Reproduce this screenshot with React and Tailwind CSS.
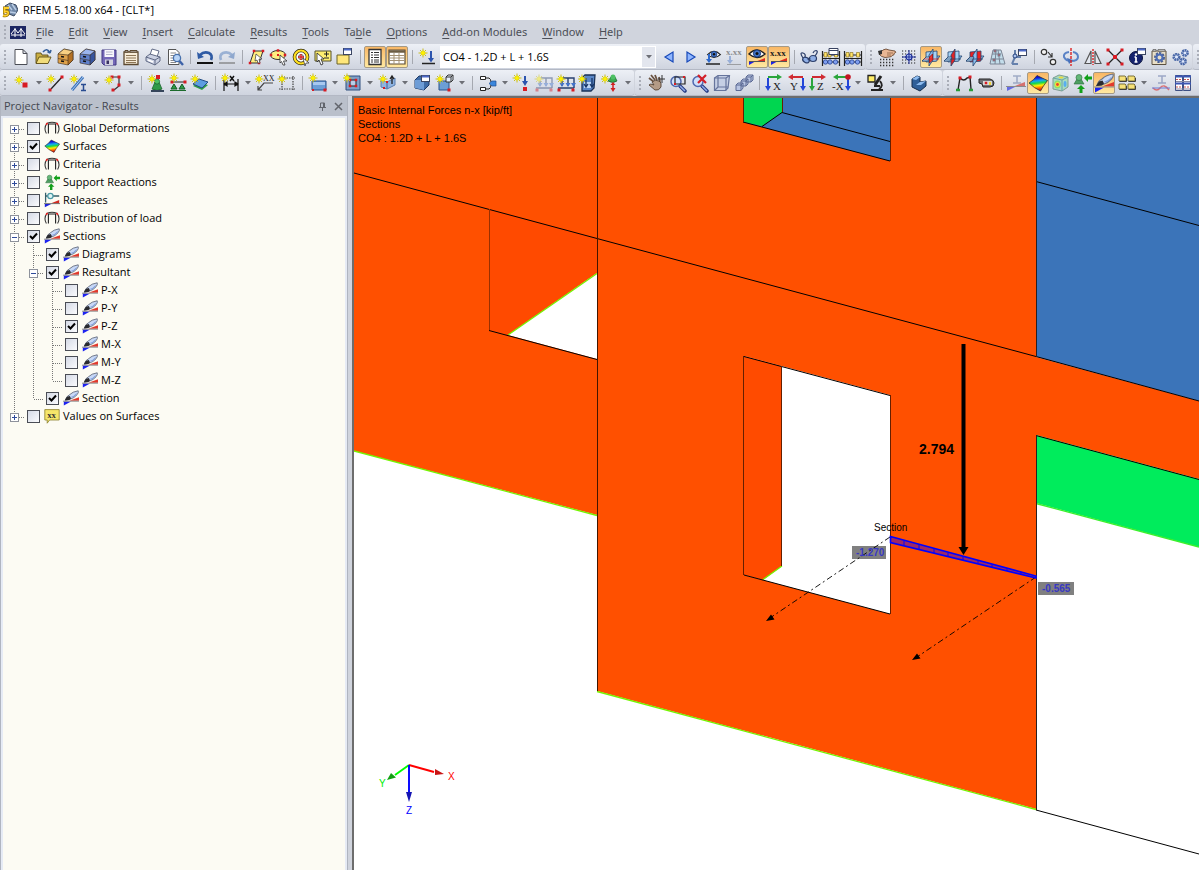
import { useState } from 'react';

const Star = ({ x = 5, y = 6 }) => (
  <g transform={`translate(${x} ${y})`} stroke="#c9bd22" strokeWidth="1" fill="none">
    <path d="M0-4.5V4.5M-4.5 0H4.5M-3-3L3 3M3-3L-3 3" />
    <circle r="2.1" fill="#fff200" stroke="#eadf10" />
  </g>
);
const Red = ({ x, y, s = 3 }) => <rect x={x - s / 2} y={y - s / 2} width={s} height={s} fill="#d81c24" />;
const Wedge = ({ y = 14 }) => (
  <g>
    <path d={`M1 ${y + 1}H9L1 ${y + 5}Z`} fill="#1b22e0" />
    <path d={`M9 ${y}L19 ${y - 4}V${y}Z`} fill="#d02a20" />
    <path d={`M0 ${y + 0.5}H20`} stroke="#555" />
  </g>
);
const Nib = () => (
  <g>
    <path d="M1 14.500H10L1 19.500Z" fill="#1c22f0" /><path d="M8 13.500L20 9V13.500Z" fill="#e23a2c" />
    <path d="M0 14H20" stroke="#8a8a8a" strokeWidth="1.200" />
    <path d="M3 12.500Q4 8 8 6Q12 2 19 1Q20 3 17.500 6Q14 10 9 11.500Z" fill="#c9d9f6" stroke="#6d7485" strokeWidth="1.200" />
    <path d="M8 9.500Q14 8 17.500 3.500Q17 7 13 9Z" fill="#7f9fe0" />
    <path d="M2 13L5 8.500L8.500 7.500L10 10.500L8 12.500Z" fill="#2a2a2e" />
  </g>
);
const Green = ({ x = 10, y = 11 }) => (
  <g transform={`translate(${x} ${y})`} fill="#2f9a48" stroke="#155b27" strokeWidth=".7">
    <path d="M-2-3H2L5 4Q0 7-5 4Z" /><circle cy="-3.500" r="2.600" fill="#4cc063" />
  </g>
);
const Abacus = ({ win }) => (
  <g>
    <path d="M1.500 4V19M18.500 4V19M1.500 8H18.500M1.500 15H18.500M1.500 11.500H18.500" stroke="#222" strokeWidth="1.200" />
    <path d="M3 5.500H6V10H3ZM7 5.500H10V10H7ZM13.500 5.500H16.500V10H13.500Z" fill="#ffe36a" stroke="#806914" strokeWidth=".6" />
    <g fill="#7f9ff0" stroke="#24408f" strokeWidth=".8"><circle cx="4.500" cy="15" r="2.200" /><circle cx="9" cy="15" r="2.200" /><circle cx="14.500" cy="15" r="2.200" /></g>
    {win && <path d="M8 1.500H17V7.500H8ZM8 3.500H17" fill="#fff" stroke="#384260" />}
  </g>
);
const Cabinet = ({ a, b, c }) => (
  <g stroke="#392a1b" strokeWidth=".6">
    <path d="M3 7L9 2L18 4V13L13 18L3 16Z" fill={a} /><path d="M13 8L18 4V13L13 18Z" fill={c} /><path d="M3 7L9 2L18 4L13 8Z" fill={b} />
    <path d="M3 11.500L13 13.500" /><path d="M6 9.500L9 10M6 14L9 14.500" stroke="#111" strokeWidth="1.700" />
  </g>
);
const Win = ({ x = 10, y = 2 }) => (
  <g transform={`translate(${x} ${y})`}><rect x=".5" y=".5" width="8" height="6" fill="#fff" stroke="#3b4663" /><path d="M1 1.500H8" stroke="#4c68c6" strokeWidth="2" /></g>
);
const Mag = () => (
  <g><path d="M12 13L17 18" stroke="#253b83" strokeWidth="3.500" strokeLinecap="round" /><path d="M12 13L17 18" stroke="#93adeb" strokeWidth="1.500" /><circle cx="8" cy="8.500" r="5" fill="#cfe0fb" stroke="#4f68ae" strokeWidth="1.500" /></g>
);
const Axes = ({ a, b, t, neg }) => (
  <g>
    {neg ? (
      <g><path d="M17 4H6" stroke={a} strokeWidth="2" /><path d="M17 5V14" stroke={b} strokeWidth="2" /><path d="M2 4L7 1V7Z" fill={a} /><path d="M14 13H20L17 18Z" fill={b} /></g>
    ) : (
      <g><path d="M4 4H14" stroke={a} strokeWidth="2" /><path d="M4 5V14" stroke={b} strokeWidth="2" /><path d="M18 4L13 1V7Z" fill={a} /><path d="M1 13H7L4 18Z" fill={b} /></g>
    )}
    <text x={neg ? (t.length > 1 ? 1 : 4) : 9} y="17" fontFamily="Liberation Serif, serif" fontSize="11" fill="#222">{t}</text>
  </g>
);
const Plane = ({ r }) => (
  <g stroke="#23446f" strokeWidth=".8" strokeLinejoin="round">
    <path d="M1 14L6 9H19L15 14Z" fill="#8fc2ef" />
    <path d="M5 5L16 4V14L5 15Z" fill={r === 2 ? '#ef2020' : '#a6d2f5'} />
    <path d="M8 19V8L12 2V13Z" fill={r === 1 ? '#e22323' : '#8cbfee'} />
    <path d="M1 14L5 10H9L7 14Z" fill="#b9dcf7" />
    {r === 0 && <path d="M8.500 10L11.500 7V13L8.500 16Z" fill="#ef3b33" stroke="#9b1010" />}
    <path d="M3 12H18" stroke={r === 0 ? '#c22' : '#23446f'} />
  </g>
);
const Hand = () => (
  <g><path d="M6 3Q9 1 12 3L18 4Q20 5.500 17 6.500Q18 8 15 8.500Q15 10 12 10L8 10.500Q4 10 2 7Z" fill="#e9b794" stroke="#5b3a24" strokeWidth=".8" /><path d="M1 4L5 3V7L2 8Z" fill="#333" /><path d="M10 6H16M10 8H14" stroke="#7c5137" strokeWidth=".7" /></g>
);
const Eye = () => (
  <g><path d="M2 7Q10-1 18 7Q10 14 2 7Z" fill="#fff" stroke="#222" strokeWidth="1.400" /><circle cx="10" cy="6.500" r="3.600" fill="#4375c9" stroke="#1b3c7d" /><circle cx="10" cy="6.500" r="1.500" fill="#111" /></g>
);
const Frame = () => (
  <g fill="none"><path d="M5.500 17V5H14.500V17" stroke="#222" strokeWidth="1.400" /><path d="M3 17Q-1 10 4 4Q10 1.500 16 4Q21 10 17 17" stroke="#333" strokeWidth="1.300" /><path d="M2.500 6L4.500 3.800M15.500 3.800L17.500 6" stroke="#e22" strokeWidth="2" /></g>
);
const LoadDown = ({ pale }) => (
  <g opacity={pale ? 0.45 : 1}><path d="M6 5H18V15M6 5V13M12 5V13M2 15H18" stroke="#28406f" fill="none" strokeWidth="1.400" /><path d="M3.500 10H8.500L6 14ZM9.500 10H14.500L12 14ZM15 10H20L17.500 14Z" fill="#4272cb" /><Red x={3} y={17} /><Red x={17} y={17} /><Star /></g>
);
const Rainbow = () => (
  <g>
    <defs>
      <linearGradient id="iso" x1=".35" y1="0" x2=".5" y2="1">
        <stop offset=".15" stopColor="#1212d8" /><stop offset=".35" stopColor="#16a8f4" /><stop offset=".5" stopColor="#18d84a" /><stop offset=".66" stopColor="#fff200" /><stop offset=".8" stopColor="#ff7a00" /><stop offset=".95" stopColor="#e81010" />
      </linearGradient>
    </defs>
    <path d="M1 10Q6 7 9 2.500Q14 5 19.500 7.500Q15 13 12.500 18Q6 15 1 10Z" fill="url(#iso)" stroke="#222" strokeWidth=".7" />
  </g>
);
const SupportArrows = () => (
  <g><g fill="#4f9f62" stroke="#2c6b3c" strokeWidth=".6"><path d="M5 6H9L12 11H2Z" /><circle cx="7" cy="4.500" r="3" fill="#64b878" /></g><path d="M12 5L16 1V3.500H20V6.500H16V9Z" fill="#12a01a" /><path d="M9 12L13 16H10.500V20H7.500V16H5Z" fill="#12a01a" /></g>
);

const ICONS = {
  new: <path d="M4 2.500H12L16 6.500V17.500H4ZM12 2.500V6.500H16" fill="#fff" stroke="#4a4d55" />,
  open: <g stroke="#5e4e16" strokeWidth=".9"><path d="M3 16V6H8L9 8H15V16Z" fill="#c9ae42" /><path d="M3 16.500L6 10H18L15 16.500Z" fill="#f1dc7b" /><path d="M10 5Q14 0 17 6M17 6L14.500 4.500M17 6L18 3" fill="none" stroke="#36609b" strokeWidth="1.600" /></g>,
  cabA: <Cabinet a="#e0a24a" b="#f7cf83" c="#b47124" />,
  cabB: <Cabinet a="#5f80cc" b="#9bb5ee" c="#38559d" />,
  save: <g><path d="M3 3H17V18H5L3 16Z" fill="#7468b8" stroke="#423982" /><path d="M5.500 3H15V10H5.500Z" fill="#f7f7fc" /><path d="M7 5H13.500M7 7.500H13.500" stroke="#b5b5cc" /><path d="M6 12.500H14V18H6Z" fill="#d2d2e0" /><path d="M7.500 13.500H10V17H7.500Z" fill="#383262" /></g>,
  notes: <g><path d="M3 5H17V17.500H3Z" fill="#f7ecd8" stroke="#5c4930" strokeWidth="1.300" /><path d="M4 3.500H7V5H4ZM9 3.500H16V5H9Z" fill="#ddd" stroke="#5c4930" /><path d="M5 8.500H15M5 11H15M5 13.500H15M5 15.500H15" stroke="#8d7656" /></g>,
  print: <g stroke="#555f7c" strokeWidth=".9"><path d="M7 8L9 2L16 4L14 10Z" fill="#fff" /><path d="M3 10L7 7L17 10V14L12 18L3 14Z" fill="#cbd1e2" /><path d="M3 10L12 13L17 10M12 13V18" fill="none" /><path d="M5 13L10 15" stroke="#fff" strokeWidth="1.500" /></g>,
  preview: <g><path d="M3.500 2.500H11L14 5.500V17.500H3.500Z" fill="#fff" stroke="#555" /><path d="M5.500 6H11M5.500 8.500H9M5.500 11H8M5.500 13.500H9M5.500 15.500H11" stroke="#888" /><circle cx="12" cy="11" r="3.600" fill="#b8d4f6" stroke="#4770ac" strokeWidth="1.300" /><path d="M14.500 14L18 18" stroke="#3d62a8" strokeWidth="2.400" /></g>,
  undo: <g><path d="M5 8Q9 4 14 6Q18 8 16 13" fill="none" stroke="#2f5ba4" strokeWidth="2.600" /><path d="M2 5L3 12L9 10Z" fill="#2f5ba4" /><path d="M2 16H18" stroke="#111" strokeWidth="2" /></g>,
  redo: <g opacity=".6"><path d="M15 8Q11 4 6 6Q2 8 4 13" fill="none" stroke="#6b8fc4" strokeWidth="2.600" /><path d="M18 5L17 12L11 10Z" fill="#5b82bc" /><path d="M2 16H18" stroke="#777" strokeWidth="2" /></g>,
  selPoly: <g><path d="M7 4H16L12 16H3Z" fill="#ffee80" stroke="#333" /><Red x={7} y={4} s={2.500} /><Red x={16} y={4} s={2.500} /><Red x={12} y={16} s={2.500} /><Red x={3} y={16} s={2.500} /><path d="M9 7L15 12H12L13 16L11 16L10 13L8 14Z" fill="#fff" stroke="#333" strokeWidth=".7" /></g>,
  selEll: <g><ellipse cx="9" cy="8" rx="7.500" ry="4.500" fill="#ffee80" stroke="#333" /><Red x={9} y={8} s={2} /><Red x={2} y={8} s={2.500} /><Red x={9} y={3.500} s={2.500} /><Red x={16} y={8} s={2.500} /><path d="M11 8L18 14H14.500L16 18L14 18L12.500 14.500L11 16Z" fill="#fff" stroke="#333" strokeWidth=".8" /></g>,
  selRing: <g><circle cx="10" cy="10" r="6.500" fill="#fff" stroke="#302b10" strokeWidth="3.600" /><circle cx="10" cy="10" r="6.500" fill="none" stroke="#ffe020" strokeWidth="2.200" /><circle cx="10" cy="10" r="2.500" fill="none" stroke="#555" /><path d="M10 7V13M7 10H13" stroke="#d22" strokeWidth="1.400" /><path d="M12 11L18 16L15 16L14 19Z" fill="#fff" stroke="#333" strokeWidth=".7" /></g>,
  selPm: <g><path d="M2 4H18V14H2Z" fill="#ffee70" stroke="#55502b" /><path d="M4 6L11 12H8L10 17L8 18L6 13L4 15Z" fill="#fff" stroke="#222" strokeWidth=".8" /><path d="M11 7H16M13.500 4.500V9.500M11 11H16" stroke="#222" /></g>,
  selWin: <g><path d="M2 8H14V17H2Z" fill="#ffe77a" stroke="#6a6228" /><Win x={8} y={1} /></g>,
  list: <g><path d="M4 2.500H16V17.500H4Z" fill="#fff" stroke="#333" strokeWidth="1.300" /><path d="M6 5.500H8M9 5.500H14M6 8H8M9 8H14M6 10.500H8M9 10.500H14M6 13H8M9 13H14M6 15H8M9 15H14" stroke="#333" /></g>,
  table: <g><path d="M2 3H18V17H2Z" fill="#fff" stroke="#5a4b33" strokeWidth="1.200" /><path d="M2 4.500H18" stroke="#6c5d44" strokeWidth="2.500" /><path d="M3 8.500H17M3 11H17M3 13.500H17M7 6V17M12 6V17" stroke="#a39175" /></g>,
  newLoad: <g><Star x={6} y={6} /><path d="M14 4V12" stroke="#2c54ae" strokeWidth="2" /><path d="M11 11H17L14 15.500Z" fill="#2c54ae" /><path d="M5 16.500H18" stroke="#222" strokeWidth="1.500" /></g>,
  prev: <path d="M14 5V15L6 10Z" fill="#8fb6ff" stroke="#1748b8" strokeWidth="1.200" />,
  next: <path d="M6 5V15L14 10Z" fill="#8fb6ff" stroke="#1748b8" strokeWidth="1.200" />,
  eyeLoad: <g><g transform="translate(3 2) scale(.8)"><Eye /></g><path d="M6 7V13" stroke="#2f6acc" strokeWidth="2" /><path d="M3 12H9L6 16Z" fill="#2f6acc" /><path d="M3 17H17" stroke="#222" strokeWidth="1.500" /></g>,
  xxLoad: <g opacity=".6"><text x="1" y="8" fontSize="9" fontWeight="bold" fill="#555" fontFamily="Liberation Serif, serif">x.xx</text><path d="M5 9V15" stroke="#6d90cf" strokeWidth="2" /><path d="M2 13H8L5 17Z" fill="#6d90cf" /><path d="M2 17.500H16" stroke="#777" /></g>,
  eyeRes: <g><Eye /><path d="M2 14L9 14L2 18Z" fill="#1c22e8" /><path d="M18 11V14.500H9Z" fill="#dd2b20" /><path d="M2 14.500H18" stroke="#555" /></g>,
  xxRes: <g><text x="1" y="9" fontSize="9" fontWeight="bold" fill="#222" fontFamily="Liberation Serif, serif">x.xx</text><path d="M2 14L9 14L2 18Z" fill="#1c22e8" /><path d="M18 11V14.500H9Z" fill="#dd2b20" /><path d="M2 14.500H18" stroke="#555" /></g>,
  glasses: <g fill="#8eaee5" stroke="#2c3e69" strokeWidth="1.200"><ellipse cx="7" cy="13" rx="3.500" ry="2.500" transform="rotate(30 7 13)" /><ellipse cx="14" cy="11.500" rx="3.500" ry="3" /><path d="M4 11Q0 5 4 6Q7 7 6 10M9 13Q10 10 11 12M16 9Q20 4 17 3.500Q15 3.500 14 6" fill="none" /></g>,
  abaWin: <Abacus win />,
  aba: <Abacus />,
  handGrid: <g><Hand /><path d="M3 12.500H18M3 15.500H18M3 18.500H18" stroke="#333" strokeWidth="1.300" strokeDasharray="1.300 1.700" /></g>,
  gridSnap: <g><path d="M3 4H18M3 7H18M3 10H18M3 13H18M3 16H18" stroke="#222" strokeWidth="1.200" strokeDasharray="1.200 1.800" /><circle cx="10" cy="10" r="3" fill="#b5c9f5" stroke="#1d2d9a" strokeWidth="1.200" /><path d="M10 3V17M3 10H17" stroke="#1d2d9a" /></g>,
  plane0: <Plane r={0} />, plane1: <Plane r={1} />, plane2: <Plane r={2} />,
  tower: <g fill="none" stroke="#7b8494"><path d="M6 3H14L18 17H3Z" fill="#c3ddeb" /><path d="M5 7H14M4 12H16M9 3L8 17M11 3L13 17" /><Red x={8} y={4} s={2} /><Red x={12} y={8} s={2} /><Red x={7} y={13} s={2} /></g>,
  graph: <g><path d="M6 3V10L3 17M6 10H12M3 17H9" fill="none" stroke="#6580ac" strokeWidth="2" /><circle cx="6" cy="9" r="2" fill="#adc4ee" stroke="#24407b" /><Win x={9} y={2} /></g>,
  copyMove: <g fill="#f3f3f3" stroke="#333" strokeWidth="1.200"><circle cx="5" cy="5" r="2.700" /><circle cx="14" cy="15" r="2.700" /><path d="M9 5L13 10M13 6V10H9" fill="none" /></g>,
  rotate: <g fill="none"><path d="M8 5Q2 6 3 10Q5 14 10 14Q17 14 17 10Q17 6 12 5" stroke="#5a82c6" strokeWidth="2" /><path d="M6 11L8 17L12 13Z" fill="#4872bb" /><path d="M10 1V19" stroke="#d22" strokeWidth="1.400" strokeDasharray="3 1" /></g>,
  mirror: <g fill="none"><path d="M2 16.500L8 4V16.500ZM18 16.500L12 4V16.500Z" stroke="#555" strokeWidth="1.200" fill="#e4e8f0" /><path d="M10 2V18" stroke="#d22" strokeWidth="1.400" strokeDasharray="2 1" /></g>,
  cross: <g><path d="M3 3L17 17M17 3L3 17" stroke="#222" strokeWidth="1.300" /><Red x={3} y={3} /><Red x={17} y={3} /><Red x={3} y={17} /><Red x={17} y={17} /><Red x={10} y={10} s={4} /></g>,
  info: <g><circle cx="9" cy="11" r="6.500" fill="#15236f" stroke="#0b1440" /><path d="M9 10V15M7.500 10H9M7.500 15H10.500" stroke="#fff" strokeWidth="1.700" /><circle cx="9" cy="7.500" r="1.200" fill="#fff" /><Win x={10} y={1} /></g>,
  gearDoc: <g><path d="M3 4H17V17.500H3Z" fill="#e9dfc8" stroke="#5a5040" /><path d="M4 2.500H7V4H4ZM9 2.500H16V4H9Z" fill="#eee" stroke="#555" strokeWidth=".7" /><circle cx="10.500" cy="10.500" r="4" fill="none" stroke="#4b5f92" strokeWidth="3" strokeDasharray="2 1" /><circle cx="10.500" cy="10.500" r="3" fill="none" stroke="#4d6db6" strokeWidth="2" /></g>,
  gears: <g fill="#dfe8fb" stroke="#4a68a8" strokeWidth="2.600" strokeDasharray="1.800 .5"><circle cx="5.500" cy="10" r="2.800" /><circle cx="14" cy="6" r="2.600" /><circle cx="12" cy="14.500" r="2.600" /></g>,
  node: <g><Star x={7} y={7} /><Red x={13} y={12} s={5} /></g>,
  line: <g><path d="M5 16L16 4" stroke="#222" strokeWidth="1.300" /><Red x={4} y={17} /><Red x={16} y={4} /><Star x={5} y={6} /></g>,
  member: <g><path d="M3 17L14 4" stroke="#3e72b9" strokeWidth="3" /><path d="M3 17L14 4" stroke="#a7cdf4" /><Star x={5} y={6} /><path d="M12 11.500H17M12 17.500H17M14.500 12V17" stroke="#284b91" strokeWidth="1.500" /></g>,
  polyline: <g><path d="M7 4H15V13L10 17" fill="none" stroke="#333" strokeWidth="1.200" /><Red x={8} y={4} /><Red x={15} y={4} /><Red x={15} y={12} /><Red x={9} y={17} /><Star x={5} y={7} /></g>,
  support: <g><Green x={11} y={12} /><path d="M5 17H18V19H5Z" fill="#36455b" /><Star x={6} y={6} /><Red x={12} y={4} s={4} /></g>,
  lineSup: <g><path d="M4 9H17" stroke="#222" /><Red x={4} y={9} /><Red x={17} y={9} /><path d="M6 11L9 16H3ZM14 11L17 16H11Z" fill="#2c9a44" stroke="#175b27" /><path d="M2 17.500H18" stroke="#1c6b2c" /><Star x={6} y={5} /></g>,
  surfSup: <g><path d="M3 13L9 9L18 12L12 17Z" fill="#2e9f48" /><path d="M3 11L9 6L18 9L12 15Z" fill="#5d9de0" stroke="#234d84" /><Star x={5} y={6} /></g>,
  dim: <g><path d="M3 6V18M17 6V18M3 11H17M3 11L6 9V13ZM17 11L14 9V13Z" stroke="#111" strokeWidth="1.200" /><path d="M9 3L13 8M13 3L9 8" stroke="#111" strokeWidth="1.500" /><Star x={4} y={5} /></g>,
  note: <g><path d="M18 10H9L3 17M3 13V17H7" stroke="#444" strokeWidth="1.200" fill="none" /><text x="8" y="8" fontSize="8" fontFamily="Liberation Serif, serif" fill="#222">XX</text><Star x={4} y={6} /></g>,
  guide: <g><path d="M5 3V18M16 3V18M2 5H18M2 16H18" stroke="#444" strokeWidth="1.200" strokeDasharray="1.500 1" /><Star x={5} y={6} /></g>,
  surface: <g><path d="M4 8H18V17H4Z" fill="#6c9ed6" stroke="#28528b" /><path d="M5 9H17V12H5Z" fill="#a7c8ef" /><Red x={17} y={17} /><Red x={5} y={17} s={2} /><Star x={5} y={5} /></g>,
  opening: <g><path d="M3 3H17V17H3Z" fill="#7f9fc9" stroke="#31507f" /><path d="M7 7H13V13H7Z" fill="#b8cdea" stroke="#222" /><Red x={7} y={7} s={2.500} /><Red x={13} y={7} s={2.500} /><Red x={7} y={13} s={2.500} /><Red x={13} y={13} s={2.500} /><Star x={4} y={5} /></g>,
  thick: <g><path d="M3 7L9 9V16L3 14ZM9 9L17 5V12L9 16Z" fill="#8db3e2" stroke="#5b7fb0" /><path d="M14 4V11M12 6L14 3L16 6" stroke="#222" strokeWidth="1.300" fill="none" /><Red x={9} y={9} s={2} /><Red x={6} y={15} s={2} /><Star x={5} y={6} /></g>,
  solid: <g><path d="M3 7L7 3H17V12L12 17L3 15Z" fill="#3e6ca8" stroke="#1d3a68" /><path d="M3 7H12V17L3 15Z" fill="#6d9cd6" /><Win x={9} y={2} /></g>,
  solidNew: <g><path d="M4 8H14V17H4Z" fill="#6c9ed6" stroke="#28528b" /><path d="M11 4L13 2H18V7L16 9H11ZM11 4H16V9M16 4L18 2" fill="#e4edfa" stroke="#333" /><Red x={14} y={17} /><Star x={5} y={6} /></g>,
  flow: <g><path d="M2.500 3.500H7.500V6.500H2.500ZM2.500 14.500H7.500V17.500H2.500Z" fill="#fff" stroke="#222" /><path d="M7.500 5H11Q13 6 13 9M7.500 16H11Q13 15 13 12" fill="none" stroke="#222" /><path d="M11 10.500L14 8H18V13H14Z" fill="#3a86dc" stroke="#1f4f91" strokeWidth=".7" /></g>,
  nodeLoad: <g><Star x={5} y={5} /><path d="M13 3V10" stroke="#2c54ae" strokeWidth="2" /><path d="M10 8H16L13 13Z" fill="#2c54ae" /><Red x={13} y={16} s={4} /></g>,
  loadPale: <LoadDown pale />, load: <LoadDown />,
  solidLoad: <g><path d="M4 5L7 2H17L16 15L13 18H4Z" fill="#5a86c6" stroke="#1a3258" strokeWidth="1.300" /><path d="M6 9H13V15H6Z" fill="#bcd6f5" /><path d="M8 5V13M14 5V13M6 11L8 14L10 11M12 11L14 14L16 11" stroke="#183768" strokeWidth="1.300" fill="none" /><Star x={4} y={6} /></g>,
  impLoad: <g><path d="M7 8L10 4H14L16 8Q12 11 7 8Z" fill="#3aa850" stroke="#155b27" strokeWidth=".7" /><circle cx="12" cy="4" r="2.500" fill="#4cc063" /><path d="M12 10V17" stroke="#d22020" strokeWidth="1.500" /><path d="M9.500 12L12 9L14.500 12ZM9.500 15H14.500L12 19Z" fill="#d22020" /><Star x={4} y={6} /></g>,
  pan: <g><path d="M3 5L8 9M5 2L9 7M9 2L11 7M13 4L14 9" stroke="#6a5240" strokeWidth="1.800" /><path d="M6 9Q9 6 13 8Q16 9 15 14Q13 18 9 17L3 12Q4 10 8 12Z" fill="#b49b86" stroke="#4a3929" strokeWidth=".8" /><path d="M16 2V10M12 6H19" stroke="#333" /></g>,
  zoomBox: <g><Mag /><path d="M7 4H17V11H7Z" fill="none" stroke="#222" strokeWidth="1.200" /><Red x={16} y={4} s={2} /><Red x={7} y={11} s={2} /></g>,
  zoomX: <g><Mag /><path d="M8 2L16 10M16 2L8 10" stroke="#d41f28" strokeWidth="2.200" /></g>,
  cube: <g fill="#c5cfe4" stroke="#66749c" strokeWidth="1.200"><path d="M2.500 5L6 2.500H17.500L16 15L13.500 17.500H2.500Z" /><path d="M2.500 5H14V17.500M14 5L17.500 2.500M6 2.500V14H16M6 14L2.500 17.500" fill="none" /></g>,
  cubes: <g fill="#b9c5e2" stroke="#5c6a94"><path d="M12 4L14 2H19V7L17 9H12ZM7 8L9 6H14V11L12 13H7ZM2 12L4 10H9V15L7 17.500H2Z" /><path d="M2 12H7V17.500M7 12L9 10M7 8H12V13M12 8L14 6M12 4H17V9M17 4L19 2" fill="none" /></g>,
  axX: <Axes a="#2aa53b" b="#2345d8" t="X" />, axY: <Axes a="#d02b32" b="#2345d8" t="Y" neg />,
  axZ: <Axes a="#d02b32" b="#2aa53b" t="Z" />,
  axN: <g><Axes a="#2aa53b" b="#2345d8" t="-X" neg /><circle cx="17" cy="4" r="2.800" fill="#c51622" /></g>,
  micro: <g><path d="M2 2.500H9V9H2Z" fill="#ffee68" stroke="#222" strokeWidth="1.300" /><path d="M15 3L9 12" stroke="#222" strokeWidth="3" /><path d="M5 17H17M14 8Q18 13 13 16M8 13H14" stroke="#222" strokeWidth="2" fill="none" /></g>,
  clip: <g strokeLinejoin="round"><path d="M3 6L8 3L11 4V9L17 8V13L11 18L3 14Z" fill="#2f5f98" stroke="#142c4b" /><path d="M3 6L8 3L11 4L7 7ZM7 12L11 9L17 8L12 12Z" fill="#8dbcf0" /></g>,
  deform: <g fill="none"><path d="M4 17L6 5Q10 9 13 5L16 4L17 16" stroke="#222" strokeWidth="1.400" /><Red x={6} y={5} /><Red x={16} y={4} /><path d="M2 17H6M15 17H19" stroke="#279b38" strokeWidth="2.500" /></g>,
  motor: <g><path d="M3 6L14 6Q18 7 18 10Q18 14 14 14H7L6 11L3 10Z" fill="#707074" stroke="#222" /><path d="M7 8H16V12H7Z" fill="#d8d8d8" /><Red x={10} y={10} s={2.500} /><path d="M13 9H15V12H13Z" fill="#efd43b" /></g>,
  memRes: <g opacity=".6"><path d="M7 3H15M7 10H15M11 3V10" stroke="#7485ac" strokeWidth="1.600" /><Wedge y={13} /></g>,
  rainbow: <Rainbow />,
  solidRes: <g><path d="M3 5L9 2L18 4V14L12 18L3 16Z" fill="#a8dcc0" stroke="#7f9c90" /><path d="M3 5L12 7L18 4M12 7V18" fill="none" stroke="#6ba3a8" /><ellipse cx="7.500" cy="11.500" rx="3.300" ry="4" fill="#8ce06c" /><circle cx="7.500" cy="11.500" r="2.500" fill="#f4e13c" /><circle cx="7.500" cy="11.500" r="1.400" fill="#e9442c" /><ellipse cx="15" cy="11" rx="1.500" ry="3" fill="#58aef0" /><ellipse cx="11" cy="4.500" rx="2.500" ry="1" fill="#e8d83c" /></g>,
  supRes: <SupportArrows />,
  nib: <Nib />,
  panels: <g fill="#f6e178" stroke="#6d6430" strokeWidth=".9"><path d="M2 3H8L9 4V8H2ZM11 3H17L18 4V8H11ZM2 11H8L9 12V16H2ZM11 11H17L18 12V16H11Z" /><path d="M2.500 8.500H9.500V5M11.500 8.500H18.500V5M2.500 16.500H9.500V13M11.500 16.500H18.500V13" fill="none" stroke="#333" /></g>,
  iWave: <g opacity=".7" fill="none"><path d="M7 3H15M7 10H15M11 3V10" stroke="#7d8cb4" strokeWidth="1.500" /><path d="M2 15Q6 19 9 15Q13 10 18 17" stroke="#d44" strokeWidth="1.400" /><path d="M1 15H19" stroke="#3d52d0" /></g>,
  sheets: <g><path d="M2.500 2.500H9.500V17.500H2.500ZM10.500 2.500H17.500V17.500H10.500Z" fill="#fff" stroke="#3d4f83" /><path d="M2 3.500H18M2 10.500H18" stroke="#3c57b4" strokeWidth="2" /><path d="M3 6.500H9M11 6.500H17M3 14H9M11 14H17" stroke="#c95555" strokeDasharray="2 1" /><path d="M3 8.500H17M3 16H17" stroke="#888aa5" /></g>,
  frame: <Frame />,
  release: <g><path d="M2 1V13M2 5H19" stroke="#35606a" strokeWidth="1.600" /><circle cx="8" cy="5" r="3.300" fill="#dff5f5" stroke="#4a9aa5" strokeWidth="1.500" /><Wedge y={14} /></g>,
  values: <g><path d="M1 2H19V15H7L4 19V15H1Z" fill="#f6e66a" stroke="#8b802c" /><text x="4" y="12" fontFamily="Liberation Serif, serif" fontSize="11" fontWeight="bold" fill="#333">xx</text></g>,
};

const Icon = ({ n, small }) => (
  <svg viewBox="0 0 20 20" className={small ? 'size-4 shrink-0' : 'size-5 shrink-0'} aria-hidden="true">{ICONS[n]}</svg>
);
const Tool = ({ n, on }) => (
  <button type="button" aria-label={n} className={on ? 'grid h-[22px] w-[22px] shrink-0 place-items-center rounded-[2px] border border-[#a59a86] bg-linear-to-b from-[#f9b765] to-[#ffe9a0]' : 'grid h-[22px] w-[22px] shrink-0 place-items-center rounded-[2px] hover:bg-white/50'}>
    <Icon n={n} />
  </button>
);
const Drop = ({ n }) => (
  <button type="button" aria-label={n} aria-haspopup="menu" className="flex h-[22px] w-[35px] shrink-0 items-center pl-[2px] hover:bg-white/50">
    <Icon n={n} />
    <span className="grid flex-1 place-items-center"><Caret /></span>
  </button>
);
const Caret = () => <svg viewBox="0 0 6 4" className="h-[4px] w-[6px]" aria-hidden="true"><path d="M0 0H6L3 3.500Z" fill="#6d6f76" /></svg>;
const Sep = () => <span className="flex w-2 shrink-0 justify-center"><span className="h-[14px] w-px bg-[#a5a8b0]" /></span>;
const Grip = () => (
  <span className="flex w-[10px] shrink-0 flex-col items-center gap-[2px]">
    <i className="size-[2px] bg-[#a9adb7]" /><i className="size-[2px] bg-[#a9adb7]" /><i className="size-[2px] bg-[#a9adb7]" /><i className="size-[2px] bg-[#a9adb7]" />
  </span>
);
const Bar = ({ children, grow }) => (
  <div role="toolbar" className={grow ? 'flex h-[26px] min-w-0 flex-1 items-center overflow-hidden rounded-l-[3px] border-b border-[#b3b8c4] bg-linear-to-b from-[#edf0f6] to-[#cfd4df]' : 'flex h-[26px] shrink-0 items-center rounded-[3px] border-b border-[#b3b8c4] bg-linear-to-b from-[#edf0f6] to-[#cfd4df]'}>{children}</div>
);
const render = (list) =>
  list.split(' ').map((t, i) => {
    if (t === '|') return <Sep key={i} />;
    if (t.endsWith('>')) return <Drop key={i} n={t.slice(0, -1)} />;
    if (t.endsWith('!')) return <Tool key={i} n={t.slice(0, -1)} on />;
    return <Tool key={i} n={t} />;
  });

const MENU = [['', 'F', 'ile'], ['', 'E', 'dit'], ['', 'V', 'iew'], ['', 'I', 'nsert'], ['', 'C', 'alculate'], ['', 'R', 'esults'], ['', 'T', 'ools'], ['Ta', 'b', 'le'], ['', 'O', 'ptions'], ['', 'A', 'dd-on Modules'], ['', 'W', 'indow'], ['', 'H', 'elp']];

// Guide cells per row: "+"/"-" expander, "|" line through, "T" branch, "L" last branch.
// A trailing "^" or "_" on an expander trims the line above or below it.
const TREE = [
  { g: ['+^'], i: 'frame', t: 'Global Deformations' },
  { g: ['+'], i: 'rainbow', t: 'Surfaces', on: true },
  { g: ['+'], i: 'frame', t: 'Criteria' },
  { g: ['+'], i: 'supRes', t: 'Support Reactions' },
  { g: ['+'], i: 'release', t: 'Releases' },
  { g: ['+'], i: 'frame', t: 'Distribution of load' },
  { g: ['-'], i: 'nib', t: 'Sections', on: true },
  { g: ['|', 'T'], i: 'nib', t: 'Diagrams', on: true },
  { g: ['|', '-'], i: 'nib', t: 'Resultant', on: true },
  { g: ['|', '|', 'T'], i: 'nib', t: 'P-X' },
  { g: ['|', '|', 'T'], i: 'nib', t: 'P-Y' },
  { g: ['|', '|', 'T'], i: 'nib', t: 'P-Z', on: true },
  { g: ['|', '|', 'T'], i: 'nib', t: 'M-X' },
  { g: ['|', '|', 'T'], i: 'nib', t: 'M-Y' },
  { g: ['|', '|', 'L'], i: 'nib', t: 'M-Z' },
  { g: ['|', 'L'], i: 'nib', t: 'Section', on: true },
  { g: ['+_'], i: 'values', t: 'Values on Surfaces' },
];

function Guide({ c }) {
  const k = c[0];
  const top = !c.includes('^');
  const bottom = k !== 'L' && !c.includes('_');
  const svg = (
    <svg viewBox="0 0 19 18" className="h-[18px] w-[19px]" shapeRendering="crispEdges" aria-hidden="true">
      <g stroke="#777" strokeDasharray="1 1">
        {top && <path d="M9.500 0V10" />}
        {bottom && <path d="M9.500 10V18" />}
        {k !== '|' && <path d="M10 10.500H19" />}
      </g>
      {(k === '+' || k === '-') && (
        <g fill="none">
          <rect x="5.500" y="6.500" width="8" height="8" fill="#fff" stroke="#8e929c" />
          <path d={k === '+' ? 'M7 10.500H12M9.500 8V13' : 'M7 10.500H12'} stroke="#2f4b9b" />
        </g>
      )}
    </svg>
  );
  return k === '+' || k === '-' ? <button type="button" aria-label={k === '+' ? 'Expand' : 'Collapse'} className="shrink-0">{svg}</button> : <span className="shrink-0">{svg}</span>;
}

function Row({ g, i, t, on }) {
  const [v, setV] = useState(!!on);
  return (
    <li className="flex h-[18px] items-center pl-[2px]">
      {g.map((c, n) => <Guide key={n} c={c} />)}
      <label className="flex items-center pl-[3px]">
        <span className="grid shrink-0 place-items-center">
          <input type="checkbox" checked={v} onChange={() => setV(!v)} className="peer col-start-1 row-start-1 size-[13px] appearance-none border border-[#4a4d55] bg-linear-to-br from-[#d5dae6] to-[#fbfbfd]" />
          <svg viewBox="0 0 13 13" className="pointer-events-none col-start-1 row-start-1 size-[13px] opacity-0 peer-checked:opacity-100" aria-hidden="true"><path d="M3 6L5.500 8.500L10 3.500" fill="none" stroke="#000" strokeWidth="2" /></svg>
        </span>
        <span className="flex w-[23px] shrink-0 justify-center"><Icon n={i} small /></span>
        <span className="whitespace-nowrap">{t}</span>
      </label>
    </li>
  );
}

const Scene = () => (
  <svg viewBox="354 98 845 772" preserveAspectRatio="xMinYMin slice" className="h-full w-full" role="img" aria-label="Wall model with section results">
    <path d="M354 98H1036V809L597 691V515L354 451Z" fill="#ff5000" />
    <path d="M1036 98H1199V401L1036 357Z" fill="#3b74b9" />
    <path d="M1036 357L1199 401V479L1036 435Z" fill="#ff5000" />
    <path d="M1036 435L1199 479V547L1036 503Z" fill="#00ec5c" />
    <path d="M743 98H890V161L743 122Z" fill="#3b74b9" />
    <path d="M743 98H782V113L762 126L743 122Z" fill="#00d650" />
    <path d="M489 209L597 238V359L489 330Z" fill="#ff4a00" />
    <path d="M508 335L597 273V359Z" fill="#fff" />
    <path d="M744 356L890 395V614L744 575Z" fill="#fff" />
    <path d="M744 356L782 366V566L763 580L744 575Z" fill="#ff4b00" />
    <g strokeWidth="1.300" fill="none">
      <path d="M354 451L597 515.500M597 691.500L1036 809.500M508 335L597 273.500M763 579.500L782 566" stroke="#74f400" />
      <path d="M1036 503.500L1199 547" stroke="#3cf02c" />
    </g>
    <g stroke="#000" fill="none" strokeWidth="1">
      <path d="M354 173L597 238.500L1036 356.500L1199 401M1036 181.500L1199 225.500M1036 435.500L1199 479.500M1036 810L1199 854" />
      <path d="M489 330.500L597 359.500M744 356.500L890 395.500M744 575L890 614M743 122L890 161M782 112.500L890 141.500M782 112.500L762 126.500" />
      <path d="M597.500 98V691" stroke="#421500" /><path d="M489.500 209V330" stroke="#9a3000" />
      <path d="M1036.500 98V357M1036.500 435V810" stroke="#2a2020" />
      <path d="M743.500 98V122M890.500 98V161M782.500 98V112M743.500 356V575M781.500 366V566M890.500 395V614" stroke="#651f00" />
    </g>
    <rect x="852" y="546" width="34" height="13" fill="#808080" />
    <rect x="1038" y="582" width="36" height="13" fill="#808080" />
    <g stroke="#000" strokeWidth=".9" fill="none" strokeDasharray="6 3 2 3"><path d="M890 537L770 618M1036 577L917 657" /></g>
    <path d="M766 621L771 614.500L774.500 619.500ZM912 660L917 653.500L920.500 658.500Z" />
    <path d="M890.500 536.500L1036 576V578L890.500 542.500Z" fill="#9e2965" stroke="#0000ff" strokeWidth="1.600" />
    <path d="M904 541V545M919 545V549M934 549V553M948 553V556M963 557V560M978 561V563M992 565V567M1007 568V571M1021 572V575" stroke="#00f" />
    <path d="M963.500 344V549" stroke="#000" strokeWidth="4" /><path d="M958.500 547H968.500L963.500 555Z" />
    <g fontFamily="Liberation Sans, Arial, sans-serif">
      <g fontSize="11" fill="#000"><text x="358" y="114">Basic Internal Forces n-x [kip/ft]</text><text x="358" y="128">Sections</text><text x="358" y="142">CO4 : 1.2D + L + 1.6S</text></g>
      <text x="919" y="454" fontSize="14" fontWeight="bold">2.794</text>
      <text x="874" y="531" fontSize="10">Section</text>
      <g fontSize="10" fontWeight="bold" fill="#3838c4"><text x="856" y="556">-1.270</text><text x="1042" y="592">-0.565</text></g>
      <g fontSize="10"><text x="448" y="780" fill="#f00">X</text><text x="379" y="787" fill="#0e0">Y</text><text x="406" y="814" fill="#00f">Z</text></g>
    </g>
    <g strokeWidth="1.900"><path d="M409 765L434 772" stroke="#f00" /><path d="M409 765L395 775" stroke="#0f0" /><path d="M409 765V794" stroke="#00f" /></g>
    <path d="M444 774L435 769V775Z" fill="#c81414" /><path d="M387 780L391 773L396 777.500Z" fill="#12a012" /><path d="M409 802L406 792H412Z" fill="#1414b4" />
  </svg>
);

export default function App() {
  return (
    <div className="flex h-screen flex-col overflow-hidden bg-[#d0d4dd] font-['Open_Sans',sans-serif] text-[11px] leading-4 text-black">
      <header className="flex h-5 shrink-0 items-center gap-[5px] bg-white pl-[2px]">
        <svg viewBox="0 0 16 16" className="size-4" aria-hidden="true">
          <path d="M3 4L8 1L14 3L16 8L12 14L7 12Z" fill="#7088a8" stroke="#3d4c63" /><path d="M6 3L10 8M10 2L14 8M8 10L14 11" stroke="#b8cbe3" strokeWidth="1.500" />
          <path d="M7 6H2.500V10Q7 8 6 12Q5 14.500 1 13.500" fill="none" stroke="#8c6a00" strokeWidth="3" /><path d="M7 6H2.500V10Q7 8 6 12Q5 14.500 1 13.500" fill="none" stroke="#ffd02c" strokeWidth="1.800" />
        </svg>
        <h1>RFEM 5.18.00 x64 - [CLT*]</h1>
      </header>
      <nav className="flex h-6 shrink-0 items-center gap-[15px] font-['Noto_Sans',sans-serif] text-[#4c4f57]">
        <span className="-mr-[5px] flex items-center">
          <Grip />
          <svg viewBox="0 0 16 13" className="h-[13px] w-4" aria-hidden="true"><path d="M0 0H16V13H0Z" fill="#1d2763" /><path d="M1 9H15M5 2V11M11 2V11M1 8L5 3L8 7L11 3L15 8" stroke="#fff" fill="none" strokeWidth="1" /></svg>
        </span>
        {MENU.map(([a, b, c]) => <button type="button" key={b + c}>{a}<u className="underline-offset-2">{b}</u>{c}</button>)}
      </nav>
      <div className="flex shrink-0 gap-px">
        <Bar>
          <Grip />
          {render('new open cabA cabB save notes print preview | undo redo | selPoly selEll selRing selPm selWin | list! table! | newLoad')}
          <div className="mx-[2px] grid h-[22px] w-[216px] shrink-0 items-center bg-white">
            <select aria-label="Load case" className="col-start-1 row-start-1 h-[22px] w-full appearance-none bg-transparent pl-[3px] leading-[22px]"><option>CO4 - 1.2D + L + 1.6S</option></select>
            <span className="pointer-events-none col-start-1 row-start-1 grid h-[22px] w-[15px] place-items-center justify-self-end border border-white bg-[#e3e6ee]"><Caret /></span>
          </div>
          {render('prev next eyeLoad xxLoad eyeRes! xxRes! | glasses abaWin aba')}
          <span className="w-px" />
        </Bar>
        <Bar><Grip />{render('handGrid gridSnap plane0! plane1 plane2 tower graph | copyMove rotate mirror cross info gearDoc gears')}</Bar>
        <Bar grow><Grip /></Bar>
      </div>
      <div className="flex shrink-0 gap-px">
        <Bar><Grip />{render('node> line member> polyline> | support lineSup surfSup | dim> note guide | surface> opening> thick> solid solidNew> | flow> nodeLoad loadPale load solidLoad impLoad>')}</Bar>
        <Bar><Grip />{render('pan zoomBox zoomX cube cubes | axX axY axZ axN> micro> | clip>')}</Bar>
        <Bar grow><Grip />{render('deform motor | memRes rainbow! solidRes supRes nib! panels> iWave sheets')}</Bar>
      </div>
      <main className="flex min-h-0 flex-1">
        <aside className="flex w-[348px] shrink-0 flex-col border-x border-[#b0b5c0] bg-[#e6ebf5]">
          <div className="flex h-5 shrink-0 items-center bg-[#bac0cb] pr-1 pl-[3px] text-[#44474f]">
            <h2 className="flex-1">Project Navigator - Results</h2>
            <button type="button" aria-label="Pin" className="mr-[7px]"><svg viewBox="0 0 9 9" className="size-[9px]"><path d="M2.500 1H6.500V5.500H2.500ZM1 5.500H8M4.500 6V9M5.500 1V5" fill="none" stroke="#62656c" /></svg></button>
            <button type="button" aria-label="Close"><svg viewBox="0 0 9 9" className="size-[9px]"><path d="M1 1L8 8M8 1L1 8" stroke="#62656c" strokeWidth="1.500" /></svg></button>
          </div>
          <ul className="mx-[2px] mt-[2px] flex-1 overflow-hidden bg-[#fcfbf3] pt-px">
            {TREE.map((r, n) => <Row key={n} {...r} />)}
          </ul>
        </aside>
        <section className="ml-1 min-w-0 flex-1 overflow-hidden border-t-2 border-l-2 border-[#6d6d6d] bg-white"><Scene /></section>
      </main>
    </div>
  );
}
